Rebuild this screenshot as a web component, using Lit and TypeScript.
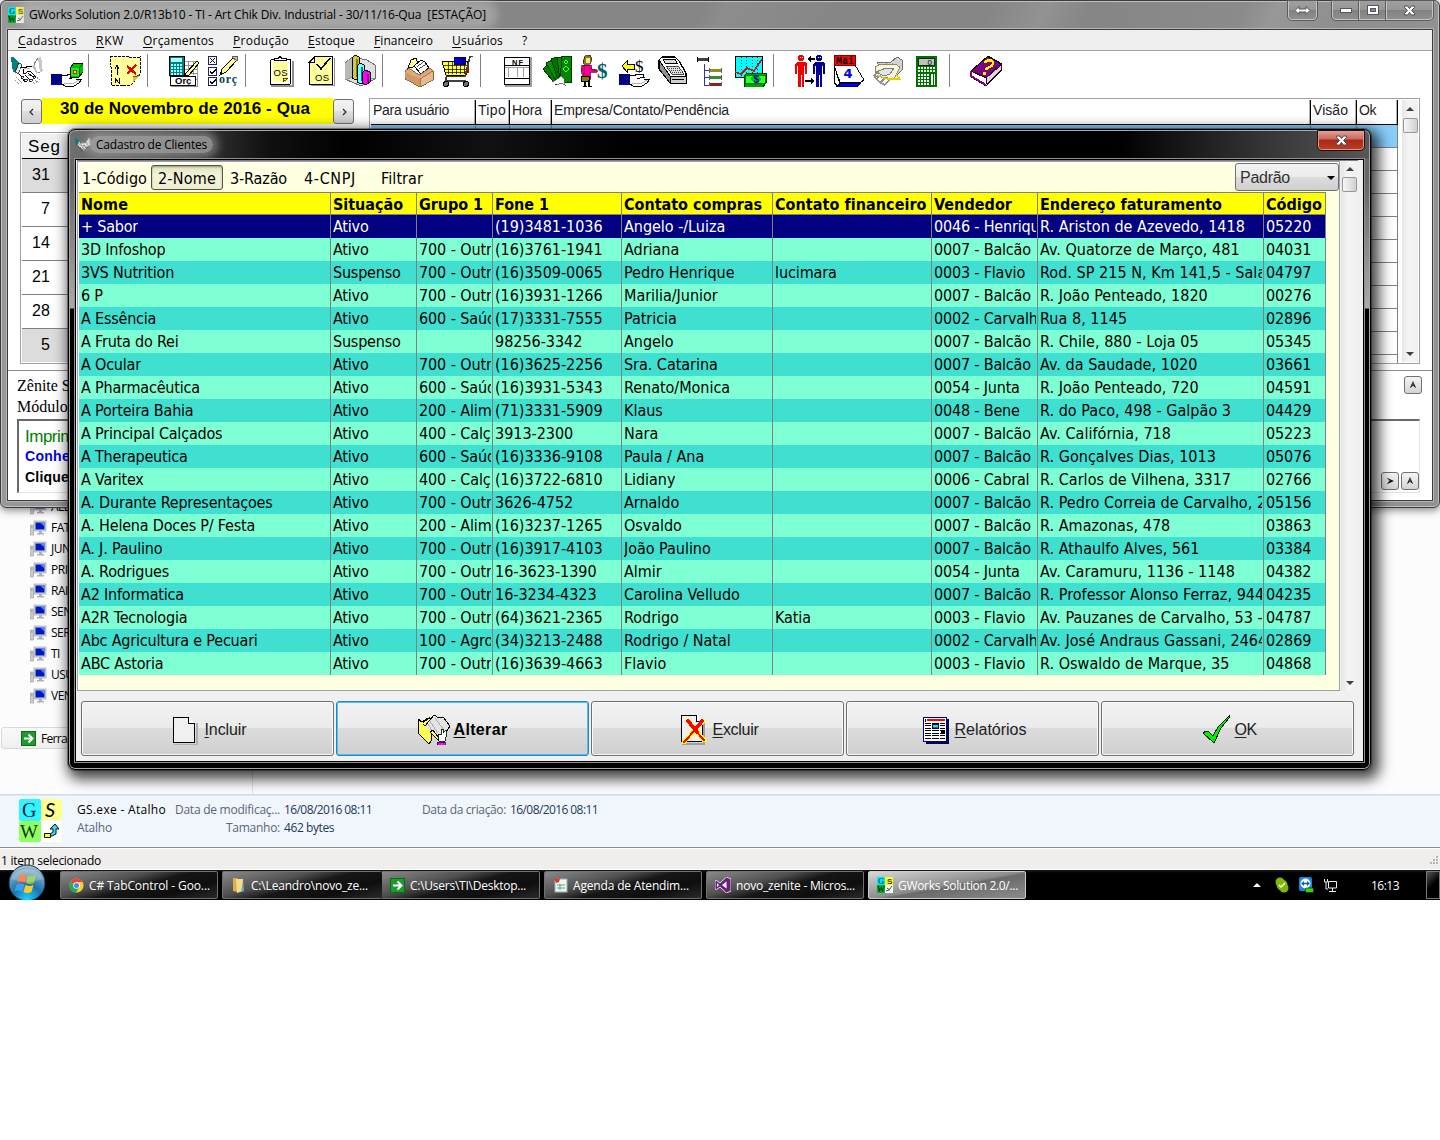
import { LitElement, html, css, svg, type TemplateResult, type SVGTemplateResult } from "lit";
import { customElement, property } from "lit/decorators.js";
import { classMap } from "lit/directives/class-map.js";

/* Text run whose tracking is adjusted so that it fills a given width. */
@customElement("fit-text")
class FitText extends LitElement {
  @property({ type: Number }) w = 0;
  static styles = css`
    :host { display: inline-block; white-space: pre; }
    .run { display: inline-block; }
  `;
  firstUpdated() {
    const run = this.renderRoot.querySelector(".run") as HTMLElement;
    const n = (this.textContent ?? "").length;
    if (!this.w || !n) return;
    const natural = run.getBoundingClientRect().width;
    run.style.letterSpacing = `${(this.w - natural) / n}px`;
  }
  render() {
    return html`<span class="run"><slot></slot></span>`;
  }
}

const icon = (w: number, h: number, body: SVGTemplateResult) =>
  html`<svg width=${w} height=${h} viewBox="0 0 ${w} ${h}" shape-rendering="crispEdges">${body}</svg>`;

const dither = svg`<defs><pattern id="dy" width="2" height="2" patternUnits="userSpaceOnUse"><rect width="2" height="2" fill="#ffffc8"/><rect width="1" height="1" fill="#ffff70"/><rect x="1" y="1" width="1" height="1" fill="#ffff70"/></pattern></defs>`;

const handshake = svg`
  <path d="M0 2h2l6 6-4 9h-2l-1-6z" fill="#008080"/><path d="M8 8l3 2-4 9-3-2z" fill="#e8e8e8" stroke="#000" stroke-width=".7"/>
  <path d="M27 3l2-2 2 5 0 6 1 4-4 2-3-5z" fill="#c8c8c8"/><path d="M27 3l-4 6 3 9 3-1" fill="#fff" stroke="#808080"/><path d="M23 9l-2 2 4 8 2-1z" fill="#c0c0c0"/>
  <path d="M10 12l5-1 6 0 4 7-2 5-2 3-3 1-4-1-6-7z" fill="#fff"/>
  <path d="M10 12.500h5l1-1h5M8 19l3 3M11 22l2 4h3M14 20l5 5M17 18l5 4M12 14v4h3l2-2 3 1 5 5" fill="none" stroke="#000"/>
  <path d="M10 21h2v2h-2zM13 24h3v2h-3zM18 24h3v2h-3zM22 21h2v2h-2z" fill="#fff" stroke="#000" stroke-width=".8"/>
  <path d="M13 13h6v1h-6zM16 20h3v1h-3z" fill="#c0c0c0"/><path d="M5 22l2 2 4 4M4 25l4 4M27 22l-2 3-4 4M29 24l-6 5" stroke="#909090" fill="none" stroke-dasharray="2 1"/>`;
const handBase = svg`
  <path d="M0 19h11v11h-11z" fill="#000080"/><path d="M0 29h9v1h-9z" fill="#0000ff"/>
  <path d="M11 20h4l3 1h5l1 2h-7l5 1 8-1-3 4-5 3h-9l-2-1z" fill="#fff"/><path d="M11 20.500h4l3-1h6l1 3-7 1M25 24h6l-3 4-5 3h-9l-3-2" fill="none" stroke="#000"/><path d="M13 28h10l5-3" stroke="#b0b0b0" fill="none"/>`;
const handBox = svg`${handBase}<path d="M19 13l4-5h9v9l-4 5h-9z" fill="#00c000" stroke="#000"/><path d="M20 13h8v8h-8z" fill="#00ff00"/><path d="M22 15h4v4h-4z" fill="#ff0000"/><path d="M23 16h2v2h-2z" fill="#ff0"/><path d="M28 13l4-4M28 13v8" stroke="#005000"/>`;
const mapIcon = svg`${dither}<path d="M1 2l7-1 5 1 4-1 6 2 8-1v8l1 6-2 4-4 2-1 5-4 4-7-1-3 1-9-1 1-5-1-6 1-5-2-4z" fill="url(#dy)" stroke="#000" stroke-dasharray="3 1"/>
  <path d="M8 11v9M6 13.500l2-3 2 3" stroke="#000" fill="none"/><path d="M18 11l9 8M27 10l-9 9" stroke="#e00000" stroke-width="2.400" fill="none"/>
  <path d="M6 28v-5l4 5v-5" stroke="#000" fill="none"/><path d="M24 22l7-2-7 8z" fill="#d8c050"/><path d="M24 22l7-2" stroke="#000" stroke-width=".6"/>`;
const calcOrc = svg`
  <rect x="10.500" y="6.500" width="20" height="18" fill="#fff" stroke="#a0a0a0"/><path d="M17 10.500h13M17 14.500h13M17 18.500h13M21.500 6v14M26.500 6v14" stroke="#909090"/>
  <rect x="2.500" y="1.500" width="15" height="19" fill="#008080" stroke="#000"/><rect x="4" y="3" width="11" height="4" fill="#a0ffff"/>
  ${[9, 12, 15, 18].map((y) => [4, 7, 10, 13].map((x) => svg`<rect x=${x} y=${y - 0.5} width="2" height="2" fill="#9ff"/>`))}
  <path d="M30 6l-10 11-3 4 5-1 10-12z" fill="#ffff80" stroke="#000"/>
  <rect x="3.500" y="21.500" width="25" height="9" fill="#fff" stroke="#000"/><path d="M4 31.500h26v-8" stroke="#909090" fill="none"/>
  <text x="8" y="29" font-family="Liberation Sans" font-size="9.500" font-weight="bold">Orç</text>`;
const checkList = svg`
  ${[1, 12, 22].map((y) => svg`<rect x="1.500" y=${y + 0.5} width="8" height="8" fill="#fff" stroke="#202060"/>`)}
  <path d="M3 3l5 5M8 3l-5 5M3 16l2 3 4-5M3 26l2 3 4-5" stroke="#000" stroke-width="1.200" fill="none"/>
  <path d="M27 2l3 3-11 12-6 3 2-6z" fill="#ffff80" stroke="#000"/><path d="M26 1h4l1 3-1 2-5-4z" fill="#c0c0c0" stroke="#606060"/><path d="M13 20l3-1-2-2z"/>
  <text x="12" y="28" font-family="Liberation Serif" font-size="12" font-weight="bold" fill="#004848" textLength="18">orç</text>`;
const clipOS = svg`${dither}<path d="M6 31h22v-25" stroke="#909090" fill="none" stroke-width="2"/>
  <rect x="5.500" y="4.500" width="20" height="25" rx="1.500" fill="#fff" stroke="#000"/><rect x="8" y="7" width="15" height="20" fill="url(#dy)"/>
  <path d="M9 5.500h12v-2h-4l-2-2-2 2h-4z" fill="#fff" stroke="#000"/><path d="M18 27v-4h5z" fill="#ff0" stroke="#000" stroke-width=".7"/>
  <text x="8.500" y="20.500" font-family="Liberation Sans" font-size="9.500" textLength="14">OS</text>`;
const pageOS = svg`${dither}<path d="M6 30.500h23v-28" stroke="#909090" fill="none"/><path d="M4.500 7l5-5.500h18v27.500h-23z" fill="url(#dy)" stroke="#000"/><path d="M4.500 7h5v-5z" fill="#fff" stroke="#000"/>
  <path d="M12 9l4 5 9-11" stroke="#000" stroke-width="1.600" fill="none"/><text x="10" y="26" font-family="Liberation Sans" font-size="9.500" textLength="14">OS</text>`;
const cubes = svg`<path d="M1 8l8-6 14 3 8 5v14l-14 7-16-7z" fill="#e0e0e0" stroke="#707070"/><path d="M1 8l8-6v20l-8 3z" fill="#b8b8b8"/><path d="M9 2v20l-8 3M9 22l8 2 14-1" stroke="#909090" fill="none"/>
  <path d="M8 3l3-3 4 2v20l-3 3-4-2z" fill="#d0c840" stroke="#000"/><path d="M13 4v18" stroke="#808000" stroke-width="2"/>
  <path d="M13 11l3-3 4 2v16l-3 3-4-2z" fill="#7ff" stroke="#000"/><path d="M18 12v14" stroke="#008080" stroke-width="2"/>
  <path d="M18 18l3-3 5 2v10l-4 3-4-2z" fill="#f0f" stroke="#000"/><path d="M24 19v8" stroke="#800080" stroke-width="2"/>`;
const boxIcon = svg`${dither}<path d="M5 13l3-8 5-2 3 8z" fill="url(#dy)" stroke="#000"/><path d="M11 11l7-6 4 2 4 6-8 6z" fill="#fff" stroke="#000"/><path d="M14 12l7-6M16 14l7-5" stroke="#000" stroke-width=".7"/>
  <path d="M2 16l4-3 10 7 11-7 3 3v9l-13 7-15-8z" fill="#dfa878" stroke="#805020" stroke-width=".8"/><path d="M2 17l15 7v7l-15-8z" fill="#d09868"/><path d="M17 24l13-8v9l-13 7z" fill="#e8b890" stroke="#805020" stroke-width=".6"/>`;
const cart = svg`<path d="M1 6h26l-2 14h-20z" fill="#ffff30" stroke="#000"/><path d="M2 10h25M3 14h24M5 17h21M7 6v13M11 6v13M15 6v13M19 6v13M23 6v13" stroke="#000" stroke-width=".7"/>
  <path d="M13 3l4-1 6 0v7h-10z" fill="#0000c8" stroke="#000080"/><path d="M21 2h4v8h-4z" fill="#000080"/><path d="M28 10h-2v8h2z" fill="#c00000"/>
  <path d="M32 1.500h-3l-5 20h-19M5 22v4h19l2 2" stroke="#404040" stroke-width="1.500" fill="none"/><circle cx="5" cy="29" r="2.500" fill="#707070" stroke="#000"/><circle cx="25" cy="29" r="2.500" fill="#707070" stroke="#000"/>`;
const nf = svg`<path d="M4 31h26v-29" stroke="#a0a0a0" fill="none" stroke-width="1.500"/><rect x="3.500" y="2.500" width="25" height="27" rx="1" fill="#fff" stroke="#000"/><path d="M3 10.500h25M3 23.500h25" stroke="#000"/><path d="M7.500 13v9M16.500 13v9M22.500 13v9M4 12.500h24" stroke="#a0a0a0"/>
  <text x="11" y="9.500" font-family="Liberation Sans" font-size="7.500" font-weight="bold" textLength="11">NF</text>`;
const cash = svg`<path d="M1 14l5-5 12 18-4 3z" fill="#008000" stroke="#003800"/><path d="M4 8l6-3 9 20-4 2z" fill="#009000" stroke="#003800"/><path d="M9 4l6-2 6 22-5 1z" fill="#007000" stroke="#003800"/><path d="M15 2l6 0 3 22-6 2z" fill="#009000" stroke="#003800"/>
  <path d="M20 1h9v26h-8l-3-2z" fill="#008800" stroke="#003800"/><path d="M24 5l2 2-2 2-2-2zM24 11l3 3-3 3-3-3z" fill="none" stroke="#6e6"/><path d="M10 27l4-2 5-4 3 3 0 4-2 3-7-2z" fill="#fff"/><path d="M10 27l4-2 5-4 3 3v5M14 30l6-2 4 3" stroke="#555" fill="none" stroke-width=".8"/>`;
const personDollar = svg`<path d="M5 1l5-1 2 4-2 5h-6l-1-3z" fill="#808000" stroke="#000" stroke-width=".6"/><rect x="6" y="3" width="4" height="5" fill="#ffe0a0"/><path d="M2 10h9l1 4 5 1v2h-7l1 7h-7l-3-8z" fill="#f000a0" stroke="#600040" stroke-width=".7"/><path d="M4 11v10M9 12l4 4h4" stroke="#d01040" stroke-width="1.200" fill="none"/>
  <path d="M1 21h8v5h-8z" fill="#808000" stroke="#000"/><path d="M5 27v4M9 25v6M3 31.500h4M8 31.500h4" stroke="#000" stroke-width="1.500"/>
  <text x="17" y="23" font-family="Liberation Serif" font-size="21" font-weight="bold" fill="#006068">$</text>`;
const dollarHand = svg`${handBase}<path d="M3 11l5-5v3h7v5h-7v3z" fill="#ff0" stroke="#000"/><text x="16" y="17" font-family="Liberation Serif" font-size="17">$</text>`;
const register = svg`<path d="M2 5l3-3h13l4 4 7 12v9h-16l-11-13z" fill="#fff" stroke="#000" stroke-width="1.300"/><path d="M6 4h12l2 4h-12z" fill="#d8d8d8" stroke="#000"/><path d="M9 11h12l6 8h-12z" fill="#e0e0e0" stroke="#000" stroke-width=".7"/><path d="M10 13h12M12 15h12M13 17h13" stroke="#000" stroke-width=".7" stroke-dasharray="1 1"/>
  <path d="M13 21h16v7h-16z" fill="#d0d0d0" stroke="#000"/><path d="M2 5v9l11 14v-7z" fill="#909090" stroke="#000"/><path d="M15 24.500h12" stroke="#000"/>`;
const treeIcon = svg`<path d="M1 4.500h12" stroke="#404040" stroke-width="3"/><path d="M1.500 2v5M12.500 2v5" stroke="#000"/><path d="M8.500 9v21h5M8.500 15.500h5M8.500 22.500h5" stroke="#3030c0" fill="none"/>
  <path d="M13 15.500h12" stroke="#909020" stroke-width="3"/><path d="M13 22.500h12" stroke="#309030" stroke-width="3"/><path d="M13 29h12" stroke="#902020" stroke-width="3"/><path d="M13.500 13v5M13.500 20v5M13.500 27v4M25.500 13v5M25.500 20v5M25.500 27v4" stroke="#606060"/>`;
const chart = svg`<rect x=".5" y="1.500" width="27" height="21" fill="#00ffff" stroke="#000"/><path d="M6.500 2v20M11.500 2v20M17.500 2v20M22.500 2v20" stroke="#004040" stroke-dasharray="1 2"/><path d="M0 17l6 2 6-6 7 3 8-12" stroke="#d01010" stroke-width="1.600" fill="none"/>
  <path d="M9 21l3-3h19v10l-3 4h-19z" fill="#00a000" stroke="#004000"/><path d="M10 20h20v8h-20z" fill="#30ff30" stroke="#008000"/><ellipse cx="21" cy="24" rx="5" ry="3.500" fill="#00d000"/><text x="18.500" y="28" font-family="Liberation Sans" font-size="10" font-weight="bold" fill="#0000c0">$</text>`;
const man = (x: number, c: string) => svg`<g transform="translate(${x} 0)" fill=${c}><path d="M5 0h4v1h1v4h-1v1h-4v-1h-1v-4h1z"/><path d="M3 7h8l2 2v10h-2v-8h-1v21h-2v-12h-1v12h-3v-21h-1v8h-2v-10z"/><path d="M6 2h1v1h-1zM8 2h1v1h-1z" fill="#fff"/></g>`;
const people = svg`${man(0, "#f00000")}${man(18, "#000090")}<path d="M13 4l4-3v2h4v2h-4v2zM21 26l-4-3v2h-6v2h6v2z" fill="#000"/>`;
const calendar = svg`<path d="M4 31h21l3-3h-22z" fill="#0000ff" stroke="#000080"/><path d="M1 10h21l9 15-3 2h-21l-3-8z" fill="#fff" stroke="#000"/><path d="M1 10v17l3 4 3-2z" fill="#fff" stroke="#000"/><rect x="1" y=".5" width="21" height="9.500" fill="#ff0000" stroke="#800000"/>
  <text x="3" y="8.500" font-family="Liberation Mono" font-size="10" font-weight="bold" textLength="18">Mai</text><text x="10.500" y="23" font-family="DejaVu Sans" font-size="13" font-weight="bold" fill="#0000e8">4</text>`;
const handNote = svg`<path d="M5 8l5-1h9l6-5 5 3 1 9-6 6-4 1z" fill="#d4d4d4" stroke="#707070"/><path d="M20 8l4 6M14 8l4 4" stroke="#909090"/><path d="M3 12l6-3 14 0 5 3-6 12-19-3z" fill="#f8f4e0" stroke="#909050"/><path d="M4 17l10-4h8l-4 6-6 2z" fill="#e4e4e4" stroke="#808080"/><path d="M2 20l5-3M4 24l5-4M8 28l5-5M13 30l5-6M2 20l2 4M5 24l4 5M9 28l4 2" stroke="#909090" fill="none" stroke-width="1.500"/><path d="M5 20l10 4h13l-4-5" stroke="#e0d000" stroke-width="1.200" fill="none"/>`;
const calcGreen = svg`<rect x="6" y="1" width="21" height="31" fill="#007000"/><rect x="8" y="3" width="16" height="7" fill="#c0c0c0" stroke="#003000"/><text x="17.500" y="9.500" font-family="Liberation Sans" font-size="8">0</text>
  ${[13, 16].map((y) => [8, 11, 14, 17, 20, 23].map((x) => svg`<rect x=${x} y=${y - 1} width="2" height="2" fill="#e8ffe8"/>`))}
  ${[19, 22, 25, 28].map((y) => [8, 11, 14, 17].map((x) => svg`<rect x=${x} y=${y} width="2" height="2" fill="#fff"/>`))}<rect x="21" y="19" width="2" height="11" fill="#fff"/><rect x="24" y="19" width="1" height="11" fill="#dfd"/>`;
const book = svg`<path d="M1 16l17-15 14 8-1 7-15 15-15-9z" fill="#fff" stroke="#000"/><path d="M1 16l17-15 13 8-15 14z" fill="#800080" stroke="#000"/><path d="M16 23l15-13v5l-14 14z" fill="#d8d8d8" stroke="#400040"/><path d="M1 16v5l15 9" fill="none" stroke="#800080" stroke-width="1.800"/>
  <path d="M14 8q5-5 9-1 1 4-6 6l-1 2" stroke="#ffff00" stroke-width="2.400" fill="none"/><path d="M13 17h3v2.500h-3z" fill="#ff0"/>`;

type Tool = [SVGTemplateResult | null, number];
const TOOLS: Tool[] = [
  [handshake, 11], [handBox, 51], [null, 88], [mapIcon, 109], [null, 147], [calcOrc, 167], [checkList, 207], [null, 245],
  [clipOS, 265], [pageOS, 305], [cubes, 344], [null, 382], [boxIcon, 403], [cart, 441], [null, 480],
  [nf, 501], [cash, 542], [personDollar, 580], [dollarHand, 619], [register, 657], [treeIcon, 696], [chart, 735], [null, 773],
  [people, 794], [calendar, 833], [handNote, 872], [calcGreen, 910], [null, 949], [book, 970],
];

const gsLogo = (s: number) => html`<svg width=${s} height=${s} viewBox="0 0 16 16"><rect width="8" height="8" fill="#00e8f0"/><rect x="8" width="8" height="8" fill="#ffff20"/><rect y="8" width="8" height="8" fill="#00b030"/><rect x="8" y="8" width="8" height="8" fill="#fff"/>
  <text x="1" y="7" font-family="Liberation Serif" font-size="8" font-weight="bold" fill="#006080">G</text><text x="10" y="7.200" font-family="Liberation Sans" font-size="8" font-weight="bold" fill="#404000">S</text><text x="0" y="15" font-family="Liberation Serif" font-size="8" font-weight="bold" fill="#003800">W</text><path d="M9 14l3-1 3-4M10 11l3 2" stroke="#445" fill="none"/></svg>`;

const triangle = (up: boolean, fill = "#404040") => html`<svg width="8" height="4" viewBox="0 0 8 4"><path d=${up ? "M0 4l4-4 4 4z" : "M0 0h8l-4 4z"} fill=${fill}/></svg>`;
const chevron = (d: string) => html`<svg width="12" height="12" viewBox="0 0 12 12"><path d=${d} stroke="#222" fill="none" stroke-width="1.100"/></svg>`;
const dart = (right: boolean) => html`<svg width="8" height="8" viewBox="0 0 10 10"><path d=${right ? "M1 1l9 4-9 4 3-4z" : "M1 9l4-9 4 9-4-3z"} fill="#151515"/><path d=${right ? "M2 2l3 3" : "M5 2v4"} stroke="#c08020"/></svg>`;

const COLS: [string, number][] = [
  ["Nome", 47], ["Situação", 70], ["Grupo 1", 64], ["Fone 1", 54], ["Contato compras", 138],
  ["Contato financeiro", 151], ["Vendedor", 78], ["Endereço faturamento", 182], ["Código", 56],
];
const ROWS: string[][] = [
  ["+ Sabor", "Ativo", "", "(19)3481-1036", "Angelo -/Luiza", "", "0046 - Henrique", "R. Ariston de Azevedo, 1418", "05220"],
  ["3D Infoshop", "Ativo", "700 - Outros", "(16)3761-1941", "Adriana", "", "0007 - Balcão", "Av. Quatorze de Março, 481", "04031"],
  ["3VS Nutrition", "Suspenso", "700 - Outros", "(16)3509-0065", "Pedro Henrique", "lucimara", "0003 - Flavio", "Rod. SP 215 N, Km 141,5 - Sala", "04797"],
  ["6 P", "Ativo", "700 - Outros", "(16)3931-1266", "Marilia/Junior", "", "0007 - Balcão", "R. João Penteado, 1820", "00276"],
  ["A Essência", "Ativo", "600 - Saúde", "(17)3331-7555", "Patricia", "", "0002 - Carvalho", "Rua 8, 1145", "02896"],
  ["A Fruta do Rei", "Suspenso", "", "98256-3342", "Angelo", "", "0007 - Balcão", "R. Chile, 880 - Loja 05", "05345"],
  ["A Ocular", "Ativo", "700 - Outros", "(16)3625-2256", "Sra. Catarina", "", "0007 - Balcão", "Av. da Saudade, 1020", "03661"],
  ["A Pharmacêutica", "Ativo", "600 - Saúde", "(16)3931-5343", "Renato/Monica", "", "0054 - Junta", "R. João Penteado, 720", "04591"],
  ["A Porteira Bahia", "Ativo", "200 - Alimentos", "(71)3331-5909", "Klaus", "", "0048 - Bene", "R. do Paco, 498 - Galpão 3", "04429"],
  ["A Principal Calçados", "Ativo", "400 - Calçados", "3913-2300", "Nara", "", "0007 - Balcão", "Av. Califórnia, 718", "05223"],
  ["A Therapeutica", "Ativo", "600 - Saúde", "(16)3336-9108", "Paula / Ana", "", "0007 - Balcão", "R. Gonçalves Dias, 1013", "05076"],
  ["A Varitex", "Ativo", "400 - Calçados", "(16)3722-6810", "Lidiany", "", "0006 - Cabral", "R. Carlos de Vilhena, 3317", "02766"],
  ["A. Durante Representaçoes", "Ativo", "700 - Outros", "3626-4752", "Arnaldo", "", "0007 - Balcão", "R. Pedro Correia de Carvalho, 2", "05156"],
  ["A. Helena Doces P/ Festa", "Ativo", "200 - Alimentos", "(16)3237-1265", "Osvaldo", "", "0007 - Balcão", "R. Amazonas, 478", "03863"],
  ["A. J. Paulino", "Ativo", "700 - Outros", "(16)3917-4103", "João Paulino", "", "0007 - Balcão", "R. Athaulfo Alves, 561", "03384"],
  ["A. Rodrigues", "Ativo", "700 - Outros", "16-3623-1390", "Almir", "", "0054 - Junta", "Av. Caramuru, 1136 - 1148", "04382"],
  ["A2 Informatica", "Ativo", "700 - Outros", "16-3234-4323", "Carolina Velludo", "", "0007 - Balcão", "R. Professor Alonso Ferraz, 944", "04235"],
  ["A2R Tecnologia", "Ativo", "700 - Outros", "(64)3621-2365", "Rodrigo", "Katia", "0003 - Flavio", "Av. Pauzanes de Carvalho, 53 -", "04787"],
  ["Abc Agricultura e Pecuari", "Ativo", "100 - Agro", "(34)3213-2488", "Rodrigo / Natal", "", "0002 - Carvalho", "Av. José Andraus Gassani, 2464", "02869"],
  ["ABC Astoria", "Ativo", "700 - Outros", "(16)3639-4663", "Flavio", "", "0003 - Flavio", "R. Oswaldo de Marque, 35", "04868"],
];

const winX = html`<svg width="13" height="11" viewBox="0 0 13 11"><path d="M1.500 1h3l2 2.500 2-2.500h3v1.500l-3 3 3 3v1.500h-3l-2-2.500-2 2.500h-3v-1.500l3-3-3-3z" fill="#fff" stroke="#4a4d58"/></svg>`;

/* Client register dialog */
@customElement("clients-dialog")
class ClientsDialog extends LitElement {
  static styles = css`
    :host { display: flex; flex-direction: column; box-sizing: border-box; font-family: "DejaVu Sans Condensed", "DejaVu Sans", sans-serif; color: #000;
      border: 1px solid #000; border-radius: 7px; padding: 0 6px 7px;
      background: linear-gradient(90deg, #707070 0, #4a4a4a 90px, #101010 200px, #000 280px, #111 420px, #000 560px, #000 1050px, #333 1190px, #585858 1303px) top / 100% 29px no-repeat,
        linear-gradient(180deg, #6c6c6c 0, #666 50px, #aaa 178px, #000 179px, #000 100%);
      box-shadow: inset 0 0 0 1px #a8a8a8, 0 0 0 1px rgba(0,0,0,.35), 4px 5px 14px 4px rgba(0,0,0,.75); }
    .title { height: 29px; flex: none; display: flex; align-items: flex-start; justify-content: space-between; }
    .cap { display: flex; align-items: center; height: 29px; gap: 5px; font: 12px "Open Sans", sans-serif; color: #000; }
    .glow { padding: 0 6px; margin-left: -6px; height: 17px; line-height: 17px; border-radius: 9px; background: rgba(170,170,170,.75); box-shadow: 0 0 8px 5px rgba(170,170,170,.55); }
    .close { width: 46px; height: 19px; margin: 1px 0 0 0; border: 1px solid #d89a90; border-top: 0; border-radius: 0 0 4px 4px; outline: 1px solid #2a0d0a; display: flex; align-items: center; justify-content: center;
      background: linear-gradient(180deg, #e0a298 0, #c9675a 45%, #a82a18 50%, #bb3c22 100%); box-sizing: border-box; }
    .client { flex: 1; background: #f0f0f0; border: 1px solid #000; outline: 1px solid #909090; outline-offset: 0; display: flex; flex-direction: column; min-height: 0; }
    .panel { display: flex; height: 531px; flex: none; margin: 0 5px 0 1px; border-top: 1px solid #808080; box-sizing: border-box; background: #f0f0f0; }
    .sheet { width: 1263px; flex: none; box-sizing: border-box; background: #ffffe1; border: 1px solid #a0a0a8; display: flex; flex-direction: column; box-shadow: inset 1px 0 #fff, inset 0 1px #fff; padding-left: 1px; overflow: hidden; }
    .tabs { height: 30px; flex: none; display: flex; align-items: center; font-size: 16px; }
    .tab { box-sizing: border-box; height: 25px; display: flex; align-items: center; padding-top: 2px; }
    .t1 { padding-left: 3px; padding-right: 4px; }
    .t2 { padding-left: 6px; padding-right: 6px; }
    .t3 { padding-left: 7px; padding-right: 17px; }
    .t4 { padding-right: 25px; }
    .on.tab { border: 1px solid #565644; border-radius: 3px; background: linear-gradient(#e2e2c4, #f3f3d8 40%, #efefd2); box-shadow: inset 0 1px 2px rgba(0,0,0,.35); }
    .combo { margin-left: auto; width: 104px; height: 28px; box-sizing: border-box; border: 1px solid #707070; border-radius: 3px; background: linear-gradient(#f2f2f2, #ebebeb 48%, #ddd 50%, #cfcfcf); display: flex; align-items: center; justify-content: space-between; padding: 1px 3px 0 4px; font: 16px "Liberation Sans", sans-serif; color: #333; }
    .row { width: 1247px; display: grid; grid-template-columns: 252px 86px 76px 129px 151px 159px 106px 226px 62px; height: 23px; font-size: 16px; line-height: 23px; background: #7fffd4; }
    .row.alt { background: #40e0d0; }
    .row.sel { background: #000080; color: #fff; }
    .cell { border-right: 1px solid #808080; padding-left: 2px; overflow: hidden; white-space: pre; box-sizing: border-box; display: flex; align-items: center; height: 23px; letter-spacing: -.1px; }
    .cell:nth-child(1), .cell:nth-child(2) { letter-spacing: -.2px; }
    .cell:nth-child(4), .cell:nth-child(5) { letter-spacing: -.03px; }
    .cell:nth-child(7) { letter-spacing: -.18px; }
    .cell:nth-child(8) { letter-spacing: .04px; }
    .in { overflow: hidden; margin-right: 1px; padding-top: 1px; line-height: 22px; }
    .row.head { background: #ff0; border-top: 1px solid #808080; border-bottom: 1px solid #808080; box-sizing: border-box; font-weight: bold; }
    .head .cell { height: 21px; padding-top: 2px; letter-spacing: 0; }
    .sb { width: 17px; margin: 0 0 0 1px; background: linear-gradient(90deg, #e6e6e6, #f4f4f4 40%, #f0f0f0); display: flex; flex-direction: column; align-items: center; box-sizing: border-box; padding: 6px 0 6px; }
    .thumb { width: 13px; height: 13px; border: 1px solid #979797; border-radius: 2px; background: linear-gradient(90deg, #f6f6f6, #e5e5e5 48%, #cfcfd4); margin-top: 6px; }
    .end { margin-top: auto; display: flex; }
    .actions { display: flex; gap: 2px; padding: 10px 0 0 5px; }
    .btn { width: 253px; height: 55px; flex: none; box-sizing: border-box; border: 1px solid #707070; border-radius: 3px; box-shadow: inset 0 0 0 1px #fafafa; background: linear-gradient(#f2f2f2, #ebebeb 48%, #dcdcdc 49%, #cfcfcf); display: flex; align-items: center; justify-content: center; gap: 4px; font: 16px "Liberation Sans", sans-serif; color: #222; }
    .btn svg { flex: none; }
    .btn.on { border-color: #2f83b4; box-shadow: inset 0 0 0 1px #43c6f3; font-weight: bold; color: #000; }
    .btn fit-text { padding-top: 2px; }
    u { text-underline-offset: 2px; text-decoration-thickness: 1px; }
  `;
  render() {
    const actions: [TemplateResult, string, number, boolean][] = [
      [icon(32, 32, svg`<path d="M6 31.500h23v-22" stroke="#b0b0b0" fill="none" stroke-width="2"/><path d="M5.500 4.500h15l6 6v19h-21z" fill="#f0f0f0" stroke="#000" stroke-width="1.300"/><path d="M20.500 4.500v6h6" fill="#fff" stroke="#000"/>`), "Incluir", 42, false],
      [icon(32, 32, svg`${dither}<path d="M0 6l4 3 6-4 3 1v22l-2 3-11-11z" fill="#ffff50" stroke="#000"/><path d="M5 10l7-6M12 18l-7-7" stroke="#000" fill="none"/><path d="M7 13l9-11 5 1 4 1 7 9-12 15z" fill="#e4e4e4"/><path d="M7 13l9-11 5 3 4-1 7 9-5 8" fill="none" stroke="#000"/><path d="M12 8l8 12M17 5l9 12M10 11l8 12" stroke="#909090" stroke-width=".7"/><path d="M12 19l8 8v-3l-5-7z" fill="#ffff50" stroke="#000"/><path d="M20 21l3 1v-6h2v4l3-3 1 3-2 8h-6z" fill="#fff" stroke="#000" stroke-width=".8"/><path d="M19 29h8v3h-8z" fill="#f0f" stroke="#000" stroke-width=".7"/>`), "Alterar", 54, true],
      [icon(32, 32, svg`<path d="M5 31h22v-23" stroke="#a0a0a0" fill="none" stroke-width="2"/><path d="M4.500 2.500h15l6 6v20h-21z" fill="#f0f0f0" stroke="#000" stroke-width="1.300"/><path d="M19.500 2.500v6h6" fill="#fff" stroke="#000"/><g fill="none" stroke-linecap="round"><path d="M11 8l16 19M26 8l-19 21" stroke="#ff0" stroke-width="4.500"/><path d="M11 8l9 11M25 8l-7 9" stroke="#f00" stroke-width="3.600"/><path d="M18 17l9 10M19 16l-12 13" stroke="#f00" stroke-width="2"/></g>`), "Excluir", 46, false],
      [icon(32, 32, svg`<path d="M7 30h22v-24" fill="none" stroke="#000050" stroke-width="2"/><rect x="4.500" y="4.500" width="23" height="24" fill="#fff" stroke="#000080"/><path d="M8 7h18" stroke="#f00" stroke-width="2"/><path d="M6.500 6v3" stroke="#000"/>${[10.5, 12.5, 15.5, 17.5, 20.5, 22.5, 25.5].map((y) => svg`<path d="M6 ${y}h6M13 ${y}h7M21 ${y}h5" stroke="#000"/>`)}<rect x="13.500" y="11.500" width="6" height="4" fill="#40d0ff" stroke="#000080"/><path d="M14 14.500h5" stroke="#090"/><rect x="22" y="17" width="4" height="3"/>`), "Relatórios", 72, false],
      [icon(32, 32, svg`<path d="M4 20l3-2 3 1 4 4 5-9 11-11v2l-8 10-7 15z" fill="#00f000" stroke="#002000"/>`), "OK", 22, false],
    ];
    return html`
      <div class="title">
        <div class="cap"><svg width="16" height="16" viewBox="0 0 32 32">${handshake}</svg><span class="glow"><fit-text w="111">Cadastro de Clientes</fit-text></span></div>
        <div class="close">${winX}</div>
      </div>
      <div class="client">
        <div class="panel">
          <div class="sheet">
            <div class="tabs">
              <span class="tab t1"><fit-text w="65">1-Código</fit-text></span>
              <span class="tab t2 on"><fit-text w="58">2-Nome</fit-text></span>
              <span class="tab t3"><fit-text w="57">3-Razão</fit-text></span>
              <span class="tab t4"><fit-text w="52">4-CNPJ</fit-text></span>
              <span class="tab"><fit-text w="42">Filtrar</fit-text></span>
              <span class="combo"><fit-text w="50">Padrão</fit-text>${triangle(false, "#000")}</span>
            </div>
            <div class="row head">${COLS.map(([t, w]) => html`<div class="cell"><fit-text w=${w}>${t}</fit-text></div>`)}</div>
            ${ROWS.map((r, i) => html`<div class=${classMap({ row: true, sel: i === 0, alt: i % 2 === 0 })}>${r.map((c) => html`<div class="cell"><span class="in">${c}</span></div>`)}</div>`)}
          </div>
          <div class="sb">${triangle(true)}<span class="thumb"></span><span class="end">${triangle(false)}</span></div>
        </div>
        <div class="actions">
          ${actions.map(([ic, t, w, on]) => html`<div class=${classMap({ btn: true, on })}>${ic}<fit-text w=${w}><u>${t[0]}</u>${t.slice(1)}</fit-text></div>`)}
        </div>
      </div>`;
  }
}

/* Main application window */
@customElement("main-window")
class MainWindow extends LitElement {
  static styles = css`
    :host { display: flex; flex-direction: column; box-sizing: border-box; font-family: "Open Sans", sans-serif; color: #000; border: 1px solid #3c3c3c; border-radius: 6px; padding: 0 6px 6px;
      background: linear-gradient(115deg, transparent 640px, rgba(255,255,255,.06) 660px, transparent 760px, transparent 900px, rgba(255,255,255,.1) 950px, transparent 990px, transparent 1130px, rgba(255,255,255,.1) 1160px, transparent 1220px), linear-gradient(90deg, #989898, #868686 500px, #868686 1100px, #929292);
      box-shadow: inset 0 0 0 1px #c0c0c0, 0 2px 8px rgba(0,0,0,.5); }
    .title { height: 28px; flex: none; display: flex; align-items: flex-start; justify-content: space-between; padding-left: 1px; }
    .cap { display: flex; align-items: center; height: 28px; gap: 5px; font-size: 12px; }
    .glow { padding: 0 6px; margin-left: -6px; height: 18px; line-height: 17px; border-radius: 9px; background: rgba(190,190,190,.5); box-shadow: 0 0 9px 6px rgba(190,190,190,.5); }
    .ctl { display: flex; }
    .wb { height: 19px; box-sizing: border-box; border: 1px solid #c4c4c4; border-top: 0; outline: 1px solid #5c5c5c; display: flex; align-items: center; justify-content: center; background: linear-gradient(#a0a0a0, #969696 48%, #808080 50%, #8f8f8f); width: 27px; }
    .wb.swap { width: 29px; border-radius: 0 0 4px 4px; margin-right: 15px; }
    .wb.min { border-bottom-left-radius: 4px; }
    .wb.x { width: 47px; border-bottom-right-radius: 4px; }
    .client { flex: 1; background: #fff; border: 1px solid #3c3c3c; display: flex; flex-direction: column; min-height: 0; outline: 1px solid #b4b4b4; }
    .menu { height: 20px; flex: none; background: #efefef; border-bottom: 1px solid #a0a0a0; display: flex; align-items: center; font-size: 12px; padding-left: 10px; }
    .tools { height: 47px; flex: none; display: flex; align-items: flex-start; box-sizing: border-box; padding-top: 4px; }
    .tools svg { flex: none; display: block; }
    .sep { width: 1px; height: 33px; margin-top: -1px; background: #808080; flex: none; }
    .work { height: 273px; flex: none; display: flex; box-sizing: border-box; border-bottom: 1px solid #909090; font-family: "Liberation Sans", sans-serif; }
    .left { width: 361px; flex: none; box-sizing: border-box; padding-left: 13px; }
    .date { display: flex; height: 26px; }
    .day { width: 291px; height: 26px; background: #ff0; font: bold 17px/21px "Liberation Sans", sans-serif; padding-left: 18px; box-sizing: border-box; }
    .nav { width: 21px; height: 25px; margin-top: 1px; box-sizing: border-box; border: 1px solid #707070; border-radius: 3px; background: linear-gradient(#f2f2f2, #ebebeb 48%, #ddd 50%, #cfcfcf); display: flex; align-items: center; justify-content: center; flex: none; }
    .cal { width: 330px; margin: 8px 0 0 -1px; border: 1px solid #a0a0a8; padding: 1px; font-size: 16px; letter-spacing: .1px; }
    .calhead { height: 24px; line-height: 26px; border-bottom: 1px solid #000; background: #f0f0f0; padding-left: 6px; font-size: 17px; }
    .wk { height: 33px; line-height: 31px; border-bottom: 1px solid #808080; background: #fff; width: 28px; padding-right: 300px; text-align: right; }
    .wk.off { background: #dcdcdc; }
    .wk:last-child { border-bottom: 0; }
    .agenda { width: 1051px; height: 266px; flex: none; box-sizing: border-box; border: 1px solid #a0a0a8; display: flex; padding: 1px; }
    .tbl { width: 1027px; flex: none; display: flex; flex-direction: column; }
    .r { display: grid; grid-template-columns: 105px 34px 42px 759px 46px 41px; height: 22px; border-bottom: 1px solid #808080; flex: none; }
    .r span { border-right: 1px solid #808080; }
    .r.h { height: 24px; border-bottom: 1px solid #000; font-size: 14px; line-height: 20px; color: #222; }
    .r.h span { border-right: 1px solid #000; box-shadow: inset -1px 0 #b0b0b0; padding-left: 2px; white-space: nowrap; overflow: hidden; }
    .r.sel { background: #87cefa; }
    .r.cut { height: 8px; border-bottom: 0; }
    .sb { width: 16px; margin-left: 4px; background: linear-gradient(90deg, #e6e6e6, #f4f4f4 40%, #f0f0f0); display: flex; flex-direction: column; align-items: center; box-sizing: border-box; padding: 7px 0 6px; }
    .thumb { width: 13px; height: 13px; border: 1px solid #979797; border-radius: 2px; background: linear-gradient(90deg, #f6f6f6, #e5e5e5 48%, #cfcfd4); margin-top: 7px; }
    .end { margin-top: auto; display: flex; }
    .foot { flex: 1; display: flex; flex-direction: column; padding: 4px 11px 5px 9px; }
    .serif { font: 16px/21px "Liberation Serif", serif; }
    .line { display: flex; justify-content: space-between; height: 21px; }
    .ad { margin-top: 2px; height: 74px; box-sizing: border-box; width: 1403px; border: solid; border-color: #696969 #e3e3e3 #e3e3e3 #696969; border-width: 2px 1px 1px 2px; padding: 6px 0 2px 6px; display: flex; justify-content: space-between; align-items: flex-end; font-family: "Liberation Sans", sans-serif; }
    .msgs { height: 63px; }
    .g { color: #008000; font-size: 17px; line-height: 20px; }
    .b { color: #0000e8; font-weight: bold; font-size: 14px; line-height: 18px; }
    .k { font-weight: bold; font-size: 14px; line-height: 24px; }
    .sq { width: 18px; height: 18px; box-sizing: border-box; border: 1px solid #707070; border-radius: 3px; background: linear-gradient(#f4f4f4, #d4d4d4); display: flex; align-items: center; justify-content: center; }
    .two { display: flex; gap: 2px; }
    .line .sq { margin: 1px -1px 0 0; }
    u { text-underline-offset: 2px; text-decoration-thickness: 1px; }
  `;
  render() {
    let at = 8;
    const menu: [string, number][] = [["Cadastros", 59], ["RKW", 28], ["Orçamentos", 71], ["Produção", 56], ["Estoque", 47], ["Financeiro", 59], ["Usuários", 51]];
    const heads: [string, number][] = [["Para usuário", 76], ["Tipo", 28], ["Hora", 30], ["Empresa/Contato/Pendência", 175], ["Visão", 35], ["Ok", 17]];
    return html`
      <div class="title">
        <div class="cap">${gsLogo(16)}<span class="glow"><fit-text w="457">GWorks Solution 2.0/R13b10 - TI - Art Chik Div. Industrial - 30/11/16-Qua  [ESTAÇÃO]</fit-text></span></div>
        <div class="ctl">
          <span class="wb swap"><svg width="17" height="9" viewBox="0 0 17 9"><path d="M1 4.500l4-4v2.500h7v-2.500l4 4-4 4v-2.500h-7v2.500z" fill="#fff" stroke="#555"/></svg></span>
          <span class="wb min"><svg width="12" height="5" viewBox="0 0 12 5"><rect x=".5" y=".5" width="11" height="4" fill="#fff" stroke="#556"/></svg></span>
          <span class="wb"><svg width="12" height="10" viewBox="0 0 12 10"><rect x=".5" y=".5" width="11" height="9" fill="#fff" stroke="#556"/><rect x="3.500" y="3.500" width="5" height="3" fill="#888" stroke="#556"/></svg></span>
          <span class="wb x">${winX}</span>
        </div>
      </div>
      <div class="client">
        <div class="menu">${menu.map(([t, w]) => html`<fit-text w=${w} style="margin-right:19px"><u>${t[0]}</u>${t.slice(1)}</fit-text>`)}<span>?</span></div>
        <div class="tools">${TOOLS.map(([body, x]) => {
          const gap = x - at;
          at = x + (body ? 32 : 1);
          return body ? html`<span style="margin-left:${gap}px">${icon(32, 32, body)}</span>` : html`<span class="sep" style="margin-left:${gap}px"></span>`;
        })}</div>
        <div class="work">
          <div class="left">
            <div class="date"><span class="nav">${chevron("M7 3l-3 3 3 3")}</span><div class="day"><fit-text w="250">30 de Novembro de 2016 - Qua</fit-text></div><span class="nav">${chevron("M5 3l3 3-3 3")}</span></div>
            <div class="cal"><div class="calhead"><fit-text w="33">Seg</fit-text></div>${["31", "7", "14", "21", "28", "5"].map((d, i) => html`<div class=${classMap({ wk: true, off: i === 0 || i === 5 })}>${d}</div>`)}</div>
          </div>
          <div class="agenda">
            <div class="tbl">
              <div class="r h">${heads.map(([t, w]) => html`<span><fit-text w=${w}>${t}</fit-text></span>`)}</div>
              ${Array.from({ length: 11 }, (_, i) => html`<div class=${classMap({ r: true, sel: i === 0, cut: i === 10 })}>${heads.map(() => html`<span></span>`)}</div>`)}
            </div>
            <div class="sb">${triangle(true)}<span class="thumb"></span><span class="end">${triangle(false)}</span></div>
          </div>
        </div>
        <div class="foot">
          <div class="line serif"><span>Zênite S</span><span class="sq">${dart(false)}</span></div>
          <div class="serif">Módulos</div>
          <div class="ad">
            <div class="msgs"><div class="g"><fit-text w="49">Imprim</fit-text></div><div class="b"><fit-text w="45">Conhe</fit-text></div><div class="k"><fit-text w="44">Clique</fit-text></div></div>
            <div class="two"><span class="sq">${dart(true)}</span><span class="sq">${dart(false)}</span></div>
          </div>
        </div>
      </div>`;
  }
}

const goIcon = html`<svg width="15" height="15" viewBox="0 0 15 15"><rect x=".5" y=".5" width="14" height="14" fill="#1f9a2f" stroke="#0d6a1c"/><path d="M3 7.500h8M7.500 3.500l4 4-4 4" stroke="#fff" stroke-width="2" fill="none"/></svg>`;
const pc = html`<svg width="17" height="16" viewBox="0 0 17 16"><rect x="0" y="5" width="3.500" height="10" fill="#c8ccc8" stroke="#999" stroke-width=".6"/><path d="M1 7h1.500" stroke="#2c2"/><rect x="4" y="1" width="12" height="10" fill="#d0d4d8" stroke="#aaa" stroke-width=".7"/><rect x="5.500" y="2.500" width="9" height="7" fill="#0018c0"/><path d="M10 2.500h4.500v4z" fill="#5090f0"/><path d="M9 11h3v2h2v1.500h-7v-1.500h2z" fill="#b0b0b0"/></svg>`;

@customElement("app-root")
class AppRoot extends LitElement {
  static styles = css`
    :host { display: block; position: relative; width: 1440px; height: 1140px; overflow: hidden; background: #fff; font: 12px "Open Sans", sans-serif; color: #000; }
    .explorer { height: 870px; display: flex; flex-direction: column; background: #fcfcfc; }
    .body { height: 794px; flex: none; display: flex; }
    .side { width: 252px; border-right: 1px solid #d6e5f5; padding-top: 496px; height: 298px; background: #fcfcfc; overflow: hidden; }
    .node { height: 21px; display: flex; align-items: center; padding-left: 30px; gap: 4px; font-size: 12px; letter-spacing: -.5px; }
    .tasks { margin: 21px 0 0 1px; height: 20px; width: 230px; border: 1px solid #d8d8d8; border-radius: 3px; display: flex; align-items: center; gap: 5px; padding-left: 19px; background: linear-gradient(#fafafa, #efefef); }
    .detail { height: 53px; flex: none; background: #f1f5fc; border-top: 1px solid #ccd9ea; box-shadow: inset 0 1px #dfe9f5; display: flex; padding: 4px 0 0 19px; box-sizing: border-box; }
    .logo { margin-right: 15px; }
    .info { display: grid; grid-template-columns: 98px 109px 138px 88px 200px; grid-auto-rows: 18px; line-height: 18px; padding-top: 2px; white-space: nowrap; align-content: start; }
    .info .l { color: #5a6779; }
    .info .v { color: #1e395b; }
    .info .ri { text-align: right; padding-right: 4px; }
    .status { height: 23px; flex: none; border-top: 1px solid #8c8c8c; box-shadow: inset 0 1px #fff, inset 0 -1px #fff; background: #f0edec; padding: 2px 0 0 1px; display: flex; justify-content: space-between; align-items: center; box-sizing: border-box; }
    .bar { height: 30px; background: linear-gradient(#1a1a1a, #000 3px); display: flex; align-items: center; color: #fff; position: relative; }
    .orb { position: absolute; left: 7px; top: -6px; }
    .items { display: flex; gap: 4px; padding-left: 60px; }
    .task { width: 158px; height: 28px; flex: none; box-sizing: border-box; border: 1px solid #707070; border-radius: 2px; background: linear-gradient(165deg, #8a8a8a 0, #505050 35%, #161616 52%, #0e0e0e 75%, #2a2a2a); display: flex; align-items: center; gap: 5px; padding-left: 8px; white-space: nowrap; }
    .task.wide { width: 160px; border-right: 0; }
    .task.j { margin-left: -4px; border-left: 0; border-top-left-radius: 0; border-bottom-left-radius: 0; }
    .task.on { background: linear-gradient(170deg, #d8d8d8, #8c8c8c 50%, #6a6a6a 55%, #8c8c8c); border-color: #ccc; }
    .tray { margin-left: auto; display: flex; align-items: center; height: 30px; }
    .tray .sk { margin-left: 14px; }
    .tray .tv { margin-left: 10px; }
    .tray .net { margin-left: 9px; }
    .clock { margin: 0 27px 0 33px; }
    .peek { width: 14px; height: 28px; box-sizing: border-box; border: 1px solid #777; background: linear-gradient(135deg, #555, #000 50%); }
    .main { position: absolute; left: 0; top: 0; width: 1440px; height: 508px; }
    .dialog { position: absolute; left: 68px; top: 129px; width: 1303px; height: 641px; }
  `;
  render() {
    const chrome = html`<svg width="15" height="15" viewBox="0 0 16 16"><circle cx="8" cy="8" r="7.500" fill="#fc3"/><path d="M8 8L1.500 4.200A7.500 7.500 0 0 1 14.500 4.200H8z" fill="#e43"/><path d="M8 8L1.500 4.200A7.500 7.500 0 0 0 7.500 15.500l3.500-6z" fill="#2a5"/><circle cx="8" cy="8" r="3.500" fill="#fff"/><circle cx="8" cy="8" r="2.700" fill="#48f"/></svg>`;
    const folder = html`<svg width="15" height="16" viewBox="0 0 15 16"><path d="M2 1h4l1 2v12l-5-1z" fill="#d9b24c"/><path d="M5 2h7v12l-6 2z" fill="#f6dc8a"/><path d="M12 3l1 11-3 1z" fill="#7ab"/></svg>`;
    const sheet = html`<svg width="15" height="16" viewBox="0 0 15 16"><rect x="2" y="2" width="12" height="13" fill="#eef6ee" stroke="#9ab"/><path d="M1 1l4 1 2-1-1 4-3 1z" fill="#d33"/><path d="M4 8h8M4 11h8M7 7v6" stroke="#5a8" /></svg>`;
    const vs = html`<svg width="16" height="16" viewBox="0 0 16 16"><path d="M11.500 0L16 2v12l-4.500 2L5 10l-3.500 2.500L0 12V4l1.500-.5L5 6z" fill="#68217a" stroke="#fff" stroke-width=".8"/><path d="M2 6v4l2-2zM7 8l4.500-3.500v7z" fill="#fff"/></svg>`;
    const tasks: [TemplateResult, string, number, string][] = [
      [chrome, "C# TabControl - Goo...", 121, ""], [folder, "C:\\Leandro\\novo_ze...", 117, "wide"], [goIcon, "C:\\Users\\TI\\Desktop...", 116, "j"],
      [sheet, "Agenda de Atendim...", 116, ""], [vs, "novo_zenite - Micros...", 119, ""], [gsLogo(16), "GWorks Solution 2.0/...", 120, "on"],
    ];
    return html`
      <div class="explorer">
        <div class="body"><div class="side">
          ${["ALE", "FAT", "JUN", "PRI", "RAI", "SEN", "SER", "TI", "USU", "VEN"].map((t) => html`<div class="node">${pc}<span>${t}</span></div>`)}
          <div class="tasks">${goIcon}<fit-text w="26">Ferra</fit-text></div>
        </div></div>
        <div class="detail">
          <svg class="logo" width="43" height="43" viewBox="0 0 43 43"><rect x="0" y="0" width="22" height="22" rx="2" fill="#30f4ff"/><rect x="22" width="21" height="21" rx="2" fill="#ffff90"/><rect y="22" width="22" height="21" rx="2" fill="#90ff60"/><rect x="22" y="22" width="21" height="21" fill="#fff"/>
            <text x="3" y="18" font-family="Liberation Serif" font-size="20" fill="#102050">G</text><text x="26" y="18" font-family="Lato" font-size="20" font-style="italic">S</text><text x="1" y="39" font-family="Liberation Serif" font-size="19" fill="#103010">W</text>
            <path d="M27 37h6l4-2v-5h3l-4-5-5 5h3v3l-3 2h-4z" fill="#30d8f8" stroke="#111"/><path d="M25.500 34.500h6v4h-6z" fill="#ff0" stroke="#111"/></svg>
          <div class="info">
            <span><fit-text w="89">GS.exe - Atalho</fit-text></span><span class="l ri"><fit-text w="105">Data de modificaç...</fit-text></span><span class="v"><fit-text w="88">16/08/2016 08:11</fit-text></span><span class="l ri"><fit-text w="84">Data da criação:</fit-text></span><span class="v"><fit-text w="88">16/08/2016 08:11</fit-text></span>
            <span class="l"><fit-text w="35">Atalho</fit-text></span><span class="l ri"><fit-text w="54">Tamanho:</fit-text></span><span class="v"><fit-text w="50">462 bytes</fit-text></span>
          </div>
        </div>
        <div class="status"><fit-text w="100">1 item selecionado</fit-text><svg width="12" height="12" viewBox="0 0 12 12">${[[8, 2], [8, 5], [5, 5], [8, 8], [5, 8], [2, 8]].map(([x, y]) => svg`<rect x=${x} y=${y} width="2" height="2" fill="#b8b4b2"/>`)}</svg></div>
      </div>
      <div class="bar">
        <svg class="orb" width="40" height="36" viewBox="0 0 40 36"><defs><radialGradient id="o" cx=".5" cy=".95" r=".9"><stop offset="0" stop-color="#20d0ff"/><stop offset=".45" stop-color="#1873b0"/><stop offset="1" stop-color="#9cbccc"/></radialGradient></defs>
          <circle cx="20" cy="19" r="18" fill="url(#o)" stroke="#16344a"/><path d="M12 12q4-3 8-1l-2 8q-4-2-8 0z" fill="#f2672a"/><path d="M21 11.500q4 2 8-.5l-2 8q-4 2-8 0z" fill="#8fc63d"/><path d="M9.500 20.500q4-2 8 0l-2 7q-4-2-8 0z" fill="#3aa0e8"/><path d="M18.500 21q4 2 8 0l-2 7q-4 2-8 0z" fill="#ffc82c"/><path d="M4 15a17 15 0 0 1 32 0q-16 6-32 0z" fill="#fff" opacity=".22"/></svg>
        <div class="items">${tasks.map(([ic, t, w, c]) => html`<div class="task ${c}">${ic}<fit-text w=${w}>${t}</fit-text></div>`)}</div>
        <div class="tray">
          <svg width="8" height="4" viewBox="0 0 8 4"><path d="M0 4l4-4 4 4z" fill="#fff"/></svg>
          <svg class="sk" width="14" height="16" viewBox="0 0 14 16"><circle cx="5" cy="5" r="4.500" fill="#7fba00"/><circle cx="9" cy="11" r="4.500" fill="#7fba00"/><circle cx="7" cy="8" r="5.500" fill="#7fba00"/><path d="M4 8l2 2 4-4" stroke="#fff" fill="none" stroke-width="1.500"/></svg>
          <svg class="tv" width="15" height="16" viewBox="0 0 15 16"><rect width="13" height="14" rx="2" fill="#1487e0"/><circle cx="6.500" cy="6.500" r="5" fill="#fff"/><path d="M2 6.500l3-2.500v1.700h3V4l3 2.500L8 9V7.300H5V9z" fill="#0a60b8"/><rect x="6.500" y="11" width="8" height="4.500" rx="1" fill="#3ed000" stroke="#030" stroke-width=".6"/></svg>
          <svg class="net" width="15" height="14" viewBox="0 0 15 14" fill="none" stroke="#eee"><path d="M1.500 1v3h3V1M3 4v7h2M5.500 3.500h8v6.500h-8zM9.500 10v3M6 13.500h7"/></svg>
          <span class="clock"><fit-text w="28">16:13</fit-text></span><span class="peek"></span>
        </div>
      </div>
      <main-window class="main"></main-window>
      <clients-dialog class="dialog"></clients-dialog>`;
  }
}
